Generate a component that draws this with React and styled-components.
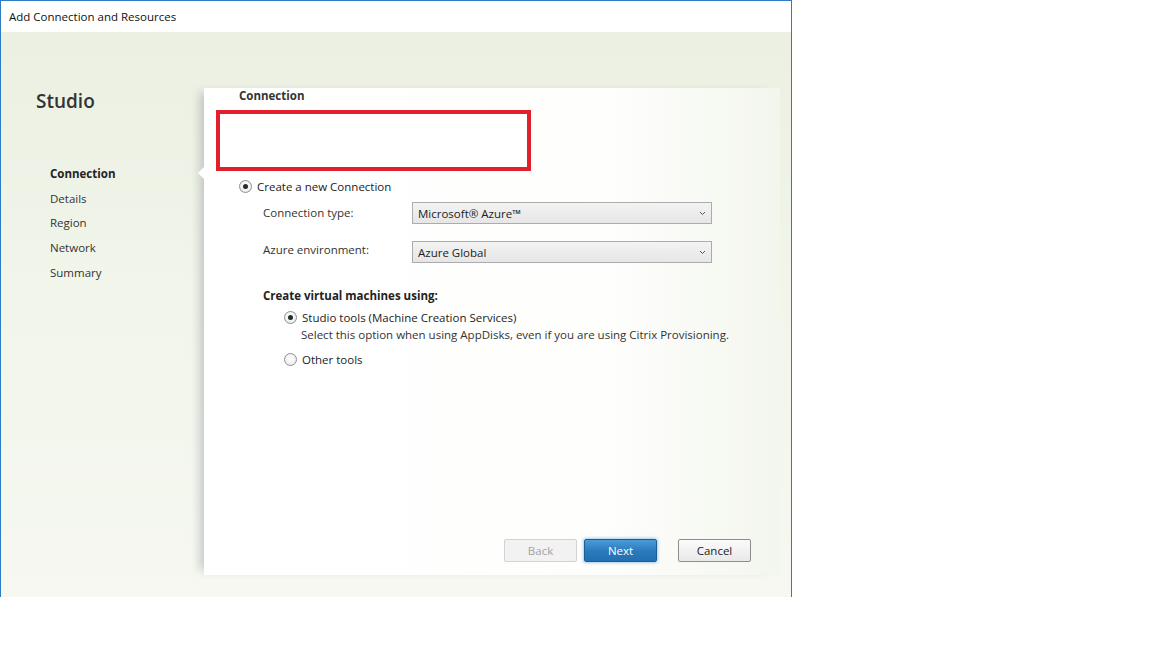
import styled, { createGlobalStyle } from "styled-components";

const GlobalStyle = createGlobalStyle`
  html, body {
    margin: 0;
    background: #fff;
  }
  body {
    font-family: "Open Sans", "Noto Sans", sans-serif;
    font-size: 12px;
    color: #333;
  }
`;

const Window = styled.div`
  width: 790px;
  height: 596px;
  border: 1px solid #2d7bc4;
  border-bottom: none;
  display: flex;
  flex-direction: column;
`;

const TitleBar = styled.div`
  height: 31px;
  flex: none;
  background: #fff;
  display: flex;
  align-items: center;
  padding-left: 8px;
  font-size: 11.5px;
  color: #111;
`;

const Body = styled.div`
  flex: 1;
  display: flex;
  background: linear-gradient(180deg, #ebf0e2 0%, #f1f5ea 45%, #f6f8f1 100%);
`;

const Sidebar = styled.div`
  width: 203px;
  flex: none;
  padding-top: 56px;
  box-sizing: border-box;
`;

const Brand = styled.div`
  margin-left: 35px;
  font-size: 19px;
  font-weight: 600;
  color: #333;
  line-height: 26px;
`;

const Steps = styled.ul`
  list-style: none;
  margin: 48px 0 0 49px;
  padding: 0;
`;

const Step = styled.li`
  height: 24.7px;
  line-height: 24.7px;
  font-size: 11.5px;
  font-weight: ${(p) => (p.$active ? 700 : 400)};
  color: ${(p) => (p.$active ? "#222" : "#333")};
`;

const Panel = styled.div`
  flex: 1;
  margin: 56px 11px 22px 0;
  position: relative;
  display: flex;
  flex-direction: column;
  padding: 0 29px 13px 12px;
  background: linear-gradient(90deg, #ffffff 0%, #fefefd 70%, #f3f6ed 100%);
  box-shadow: -9px 0 9px -5px rgba(90, 100, 115, 0.32);

  &::before {
    content: "";
    position: absolute;
    left: -6px;
    top: 79px;
    border-top: 6px solid transparent;
    border-bottom: 6px solid transparent;
    border-right: 6px solid #fff;
  }
`;

const Heading = styled.div`
  margin-left: 23px;
  margin-top: 1px;
  height: 14px;
  line-height: 14px;
  font-weight: 700;
  font-size: 11.5px;
  color: #333;
`;

const RedBox = styled.div`
  margin-top: 7px;
  width: 307px;
  height: 53px;
  border: 4px solid #e2202b;
  background: #fff;
`;

const RadioRow = styled.label`
  display: flex;
  align-items: center;
  gap: 5px;
  margin-left: ${(p) => p.$indent}px;
  margin-top: ${(p) => p.$top}px;
  height: 14px;
  font-size: 11.5px;
  color: #222;
`;

const RadioCircle = styled.span`
  width: 11px;
  height: 11px;
  border-radius: 50%;
  border: 1px solid #8e8f8f;
  background: radial-gradient(circle at 50% 40%, #ffffff 0%, #e6e6e6 100%);
  display: flex;
  align-items: center;
  justify-content: center;

  &::after {
    content: "";
    width: 5px;
    height: 5px;
    border-radius: 50%;
    background: ${(p) => (p.$checked ? "#2a2a2a" : "transparent")};
  }
`;

const FieldRow = styled.div`
  display: flex;
  align-items: center;
  margin-left: 47px;
  margin-top: ${(p) => p.$top}px;
`;

const FieldLabel = styled.div`
  width: 149px;
  font-size: 11.5px;
  color: #333;
  margin-top: ${(p) => p.$shift || 0}px;
`;

const Select = styled.div`
  width: 288px;
  height: 20px;
  border: 1px solid #acacac;
  background: linear-gradient(180deg, #f3f3f3 0%, #e6e6e6 100%);
  display: flex;
  align-items: center;
  justify-content: space-between;
  padding: 0 5px 0 5px;
  font-size: 11.5px;
  color: #222;
`;

const Section = styled.div`
  margin-left: 47px;
  margin-top: 26px;
  font-weight: 700;
  font-size: 11.5px;
  height: 14px;
  line-height: 14px;
  color: #222;
`;

const Hint = styled.div`
  margin-left: 85px;
  margin-top: 4px;
  font-size: 11.5px;
  height: 14px;
  line-height: 14px;
  color: #333;
`;

const ButtonBar = styled.div`
  margin-top: auto;
  display: flex;
  justify-content: flex-end;
  align-items: center;
`;

const Button = styled.button`
  width: 73px;
  height: 23px;
  margin-left: ${(p) => p.$gap}px;
  font-family: inherit;
  font-size: 11.5px;
  border-radius: 2px;
  padding: 0;
  border: 1px solid #8d8d8d;
  color: #222;
  background: linear-gradient(180deg, #fbfbfb 0%, #e9e9e9 100%);

  ${(p) =>
    p.$variant === "disabled" &&
    `
    border-color: #d2d2d2;
    color: #a3a3a3;
    background: #f2f2f2;
  `}

  ${(p) =>
    p.$variant === "primary" &&
    `
    border-color: #1c5d96;
    color: #fff;
    background: linear-gradient(180deg, #4b9bd8 0%, #2a79bb 55%, #2270b0 100%);
    box-shadow: 0 0 3px 1px rgba(60, 140, 210, 0.45);
  `}
`;

const Chevron = () => (
  <svg width="7" height="5" viewBox="0 0 7 5">
    <path d="M1 1 L3.5 3.5 L6 1" fill="none" stroke="#555" strokeWidth="1" />
  </svg>
);

export default function App() {
  return (
    <>
      <GlobalStyle />
      <Window>
        <TitleBar>Add Connection and Resources</TitleBar>
        <Body>
          <Sidebar>
            <Brand>Studio</Brand>
            <Steps>
              <Step $active>Connection</Step>
              <Step>Details</Step>
              <Step>Region</Step>
              <Step>Network</Step>
              <Step>Summary</Step>
            </Steps>
          </Sidebar>
          <Panel>
            <Heading>Connection</Heading>
            <RedBox />
            <RadioRow $indent={23} $top={8}>
              <RadioCircle $checked />
              Create a new Connection
            </RadioRow>
            <FieldRow $top={9}>
              <FieldLabel $shift={-2}>Connection type:</FieldLabel>
              <Select>
                Microsoft® Azure™
                <Chevron />
              </Select>
            </FieldRow>
            <FieldRow $top={17}>
              <FieldLabel $shift={-6}>Azure environment:</FieldLabel>
              <Select>
                Azure Global
                <Chevron />
              </Select>
            </FieldRow>
            <Section>Create virtual machines using:</Section>
            <RadioRow $indent={68} $top={7}>
              <RadioCircle $checked />
              Studio tools (Machine Creation Services)
            </RadioRow>
            <Hint>Select this option when using AppDisks, even if you are using Citrix Provisioning.</Hint>
            <RadioRow $indent={68} $top={10}>
              <RadioCircle />
              Other tools
            </RadioRow>
            <ButtonBar>
              <Button $variant="disabled" $gap={0}>Back</Button>
              <Button $variant="primary" $gap={7}>Next</Button>
              <Button $gap={21}>Cancel</Button>
            </ButtonBar>
          </Panel>
        </Body>
      </Window>
    </>
  );
}
